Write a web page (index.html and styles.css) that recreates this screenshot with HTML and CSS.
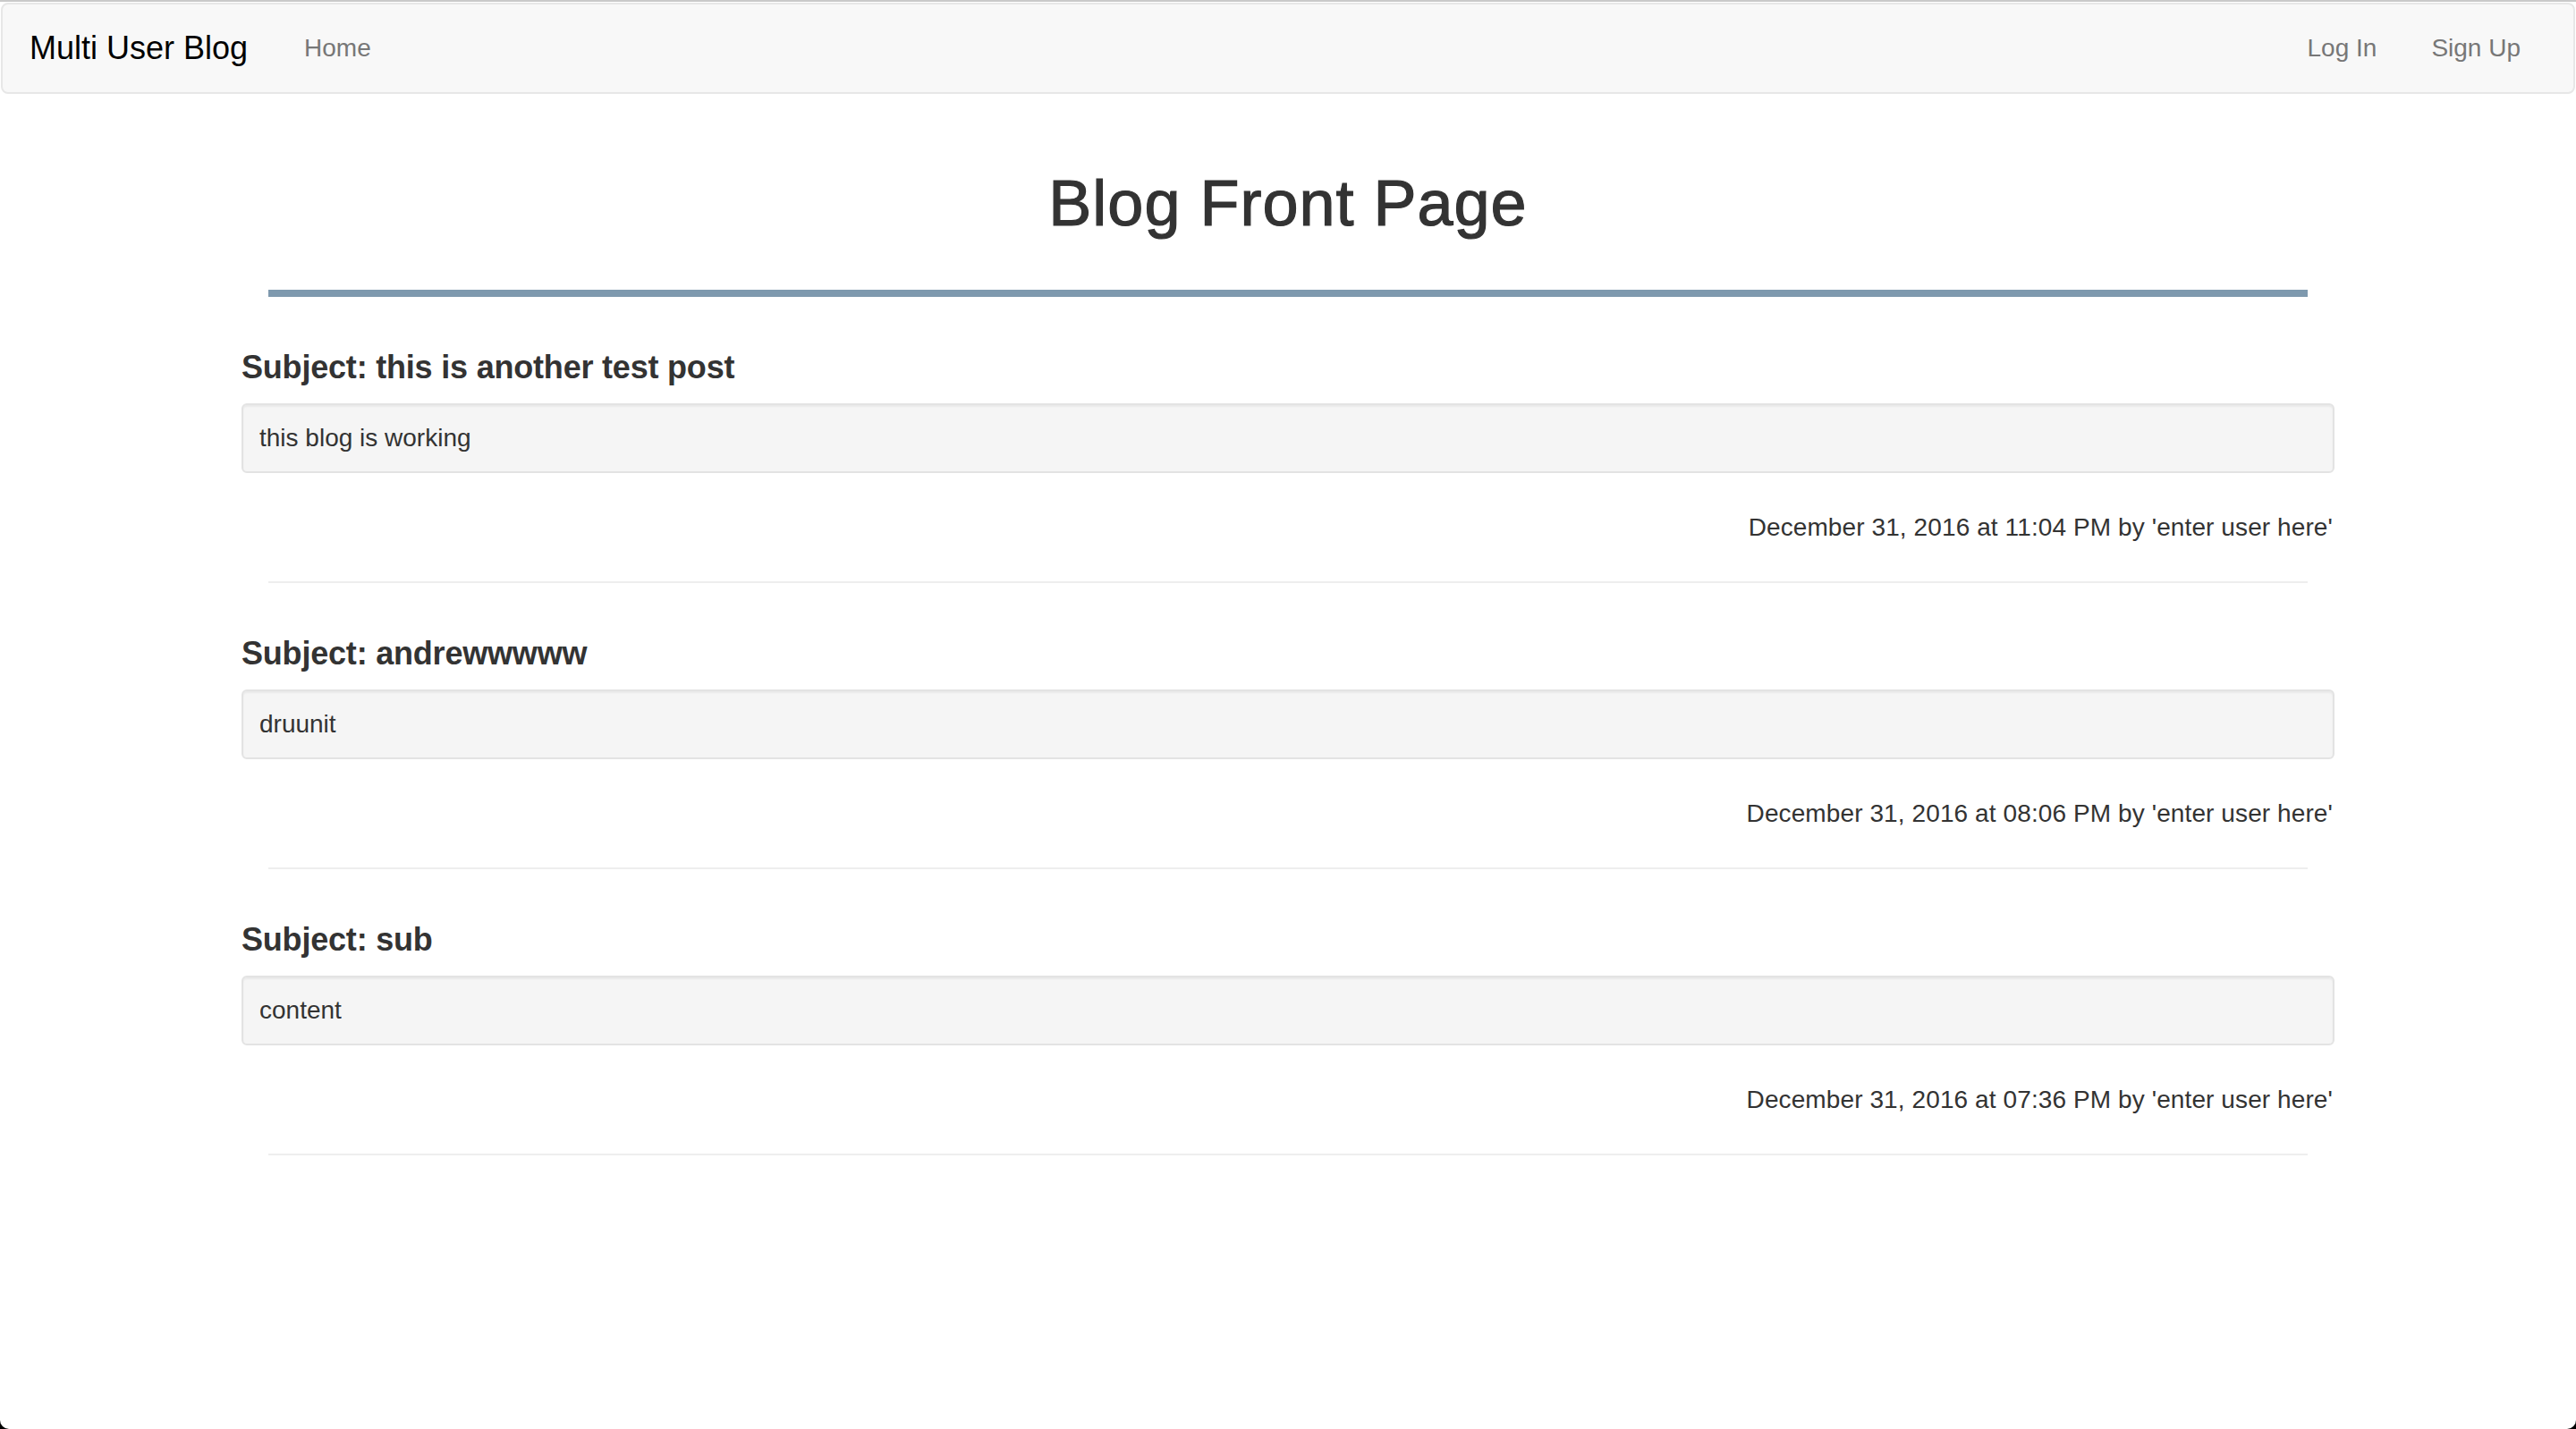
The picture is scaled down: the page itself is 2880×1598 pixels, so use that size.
FILE: index.html
```html
<!DOCTYPE html>
<html lang="en">
<head>
<meta charset="utf-8">
<title>Multi User Blog</title>
<link rel="stylesheet" href="styles.css">
</head>
<body>
<div class="window">
  <div class="window-edge"></div>
  <nav class="navbar">
    <div class="nav-left">
      <a class="brand" href="#">Multi User Blog</a>
      <a class="nav-link" href="#">Home</a>
    </div>
    <div class="nav-right">
      <a class="nav-link" href="#">Log In</a>
      <a class="nav-link" href="#">Sign Up</a>
    </div>
  </nav>
  <main class="container">
    <h1 class="page-title">Blog Front Page</h1>
    <hr class="title-rule">
    <article class="post">
      <h4 class="subject">Subject: this is another test post</h4>
      <div class="well">this blog is working</div>
      <div class="meta">December 31, 2016 at 11:04 PM by 'enter user here'</div>
      <hr class="post-rule">
    </article>
    <article class="post">
      <h4 class="subject">Subject: andrewwwww</h4>
      <div class="well">druunit</div>
      <div class="meta">December 31, 2016 at 08:06 PM by 'enter user here'</div>
      <hr class="post-rule">
    </article>
    <article class="post">
      <h4 class="subject">Subject: sub</h4>
      <div class="well">content</div>
      <div class="meta">December 31, 2016 at 07:36 PM by 'enter user here'</div>
      <hr class="post-rule">
    </article>
  </main>
</div>
</body>
</html>
```
FILE: styles.css
```css
* { box-sizing: border-box; }
html, body { margin: 0; padding: 0; }
body {
  background: #000;
  font-family: "Liberation Sans", Arial, Helvetica, sans-serif;
  font-size: 28px;
  line-height: 40px;
  color: #333;
}
a { text-decoration: none; }
.window {
  background: #fff;
  min-height: 1598px;
  border-radius: 0 0 10px 10px;
  overflow: hidden;
}
.window-edge {
  height: 2px;
  background: #c9c9c9;
}
.navbar {
  margin: 1px 1px 0;
  height: 102px;
  border: 2px solid #e7e7e7;
  border-radius: 8px;
  background: #f8f8f8;
  display: flex;
  align-items: center;
  justify-content: space-between;
  padding: 0 29px 0 30px;
}
.nav-left, .nav-right {
  display: flex;
  align-items: center;
}
.brand {
  font-size: 36px;
  line-height: 40px;
  color: #000;
  padding-right: 33px;
}
.nav-link {
  color: #777;
  font-size: 28px;
  line-height: 40px;
  padding: 0 30px;
}
.nav-right .nav-link:first-child { padding-right: 31px; }
.nav-right .nav-link:last-child { padding-right: 30px; }
.container {
  width: 2340px;
  margin: 0 auto;
  display: flex;
  flex-direction: column;
}
.page-title {
  margin: 82px 0 0;
  font-size: 72px;
  line-height: 80px;
  font-weight: normal;
  letter-spacing: 1px;
  -webkit-text-stroke: 1.2px #333;
  text-align: center;
  color: #333;
}
.title-rule {
  margin: 57px 30px 0;
  border: 0;
  height: 8px;
  background: #7e99ae;
}
.post {
  display: flex;
  flex-direction: column;
}
.subject {
  margin: 59px 0 0;
  font-size: 36px;
  line-height: 40px;
  font-weight: bold;
  letter-spacing: -0.2px;
  color: #333;
}
.well {
  margin-top: 20px;
  height: 78px;
  padding: 17px 18px;
  background: #f5f5f5;
  border: 2px solid #e3e3e3;
  border-radius: 6px;
  box-shadow: inset 0 2px 2px rgba(0,0,0,0.05);
  color: #333;
}
.meta {
  margin-top: 41px;
  text-align: right;
  padding-right: 2px;
  letter-spacing: 0.1px;
}
.post-rule {
  margin: 40px 30px 0;
  border: 0;
  height: 2px;
  background: #eee;
}
```
